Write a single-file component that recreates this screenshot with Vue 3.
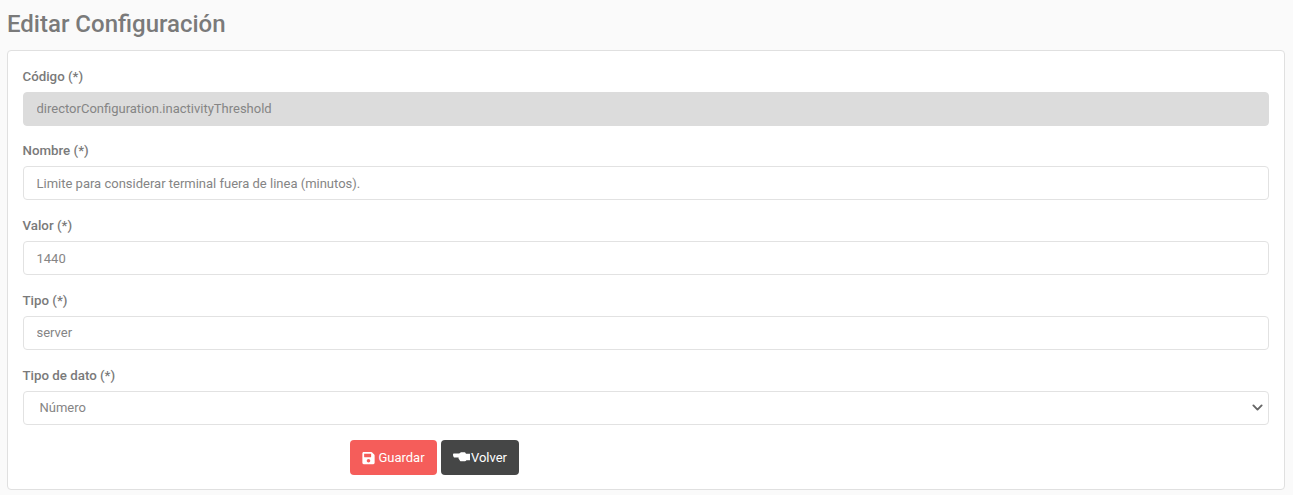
<script setup>
const fields = [
  { label: 'Código (*)', value: 'directorConfiguration.inactivityThreshold', disabled: true },
  { label: 'Nombre (*)', value: 'Limite para considerar terminal fuera de linea (minutos).' },
  { label: 'Valor (*)', value: '1440' },
  { label: 'Tipo (*)', value: 'server' },
]
</script>

<template>
  <div class="page">
    <h1 class="title">Editar Configuración</h1>
    <form class="card" @submit.prevent>
      <div v-for="field in fields" :key="field.label" class="field">
        <label>{{ field.label }}</label>
        <input type="text" :value="field.value" :disabled="field.disabled" />
      </div>
      <div class="field">
        <label>Tipo de dato (*)</label>
        <select>
          <option>Número</option>
        </select>
      </div>
      <div class="actions">
        <button type="submit" class="btn btn-save">
          <svg class="icon" viewBox="0 0 448 512" fill="currentColor">
            <path d="M433.941 129.941l-83.882-83.882A48 48 0 0 0 316.118 32H48C21.49 32 0 53.49 0 80v352c0 26.51 21.49 48 48 48h352c26.51 0 48-21.49 48-48V163.882a48 48 0 0 0-14.059-33.941zM224 416c-35.346 0-64-28.654-64-64 0-35.346 28.654-64 64-64s64 28.654 64 64c0 35.346-28.654 64-64 64zm96-304.52V212c0 6.627-5.373 12-12 12H76c-6.627 0-12-5.373-12-12V108c0-6.627 5.373-12 12-12h228.52c3.183 0 6.235 1.264 8.485 3.515l3.48 3.48A11.996 11.996 0 0 1 320 111.48z" />
          </svg>
          Guardar
        </button>
        <button type="button" class="btn btn-back">
          <svg class="icon icon-hand" viewBox="0 0 17 12" fill="currentColor">
            <path d="M1 1.6h5.2L7.6 .6c.3-.2.6-.3 1-.3h3c.5 0 .8.3 1 .7l.3.8H17v6.4h-3.6c-.3.7-.8 1.1-1.5 1.1H8c-.7 0-1.2-.5-1.2-1.1-.4-.2-.7-.6-.7-1-.4-.2-.6-.6-.6-1 0-.3.1-.5.2-.7H1C.4 4.5 0 3.9 0 3s.4-1.4 1-1.4z" />
          </svg>
          Volver
        </button>
      </div>
    </form>
  </div>
</template>

<style scoped>
.page {
  height: 495px;
  box-sizing: border-box;
  padding: 11px 8px 5px 7px;
  background: #fafafa;
  font-family: Roboto, "Liberation Sans", sans-serif;
  display: flex;
  flex-direction: column;
}

.title {
  margin: 0 0 13px;
  font-size: 24px;
  line-height: 26px;
  font-weight: 500;
  color: #7a7a7a;
}

.card {
  flex: 1;
  box-sizing: border-box;
  padding: 16.6px 15px 0 14.5px;
  background: #fff;
  border: 1px solid #e0e0e0;
  border-radius: 4px;
}

.field {
  margin-bottom: 16.75px;
}

label {
  display: block;
  height: 17px;
  margin-bottom: 7px;
  font-size: 13.3px;
  line-height: 17px;
  font-weight: 500;
  color: #7a7a7a;
}

input,
select {
  display: block;
  width: 100%;
  height: 34px;
  box-sizing: border-box;
  padding: 0 13px;
  font-family: inherit;
  font-size: 13px;
  color: #858585;
  background-color: #fff;
  border: 1px solid #e2e2e2;
  border-radius: 4px;
  outline: none;
}

input:disabled {
  background: #dcdcdc;
  border-color: #dcdcdc;
  color: #858585;
  opacity: 1;
}

select {
  padding-left: 16px;
  appearance: none;
  background-image: url("data:image/svg+xml,%3Csvg xmlns='http://www.w3.org/2000/svg' viewBox='0 0 16 16'%3E%3Cpath fill='none' stroke='%23666' stroke-linecap='round' stroke-linejoin='round' stroke-width='2.8' d='M2 5l6 6 6-6'/%3E%3C/svg%3E");
  background-repeat: no-repeat;
  background-position: right 5px center;
  background-size: 11px 11px;
}

.actions {
  display: flex;
  gap: 4px;
  margin-top: -1.35px;
  padding-left: 327.5px;
}

.btn {
  display: flex;
  align-items: center;
  justify-content: center;
  height: 35px;
  padding: 0;
  border: none;
  border-radius: 4px;
  color: #fff;
  font-family: inherit;
  font-size: 13px;
  font-weight: 400;
}

.btn-save {
  width: 87px;
  gap: 3px;
  background: #f55d5a;
}

.btn-back {
  width: 78px;
  gap: 1px;
  background: #454646;
}

.icon {
  width: 13px;
  height: 14px;
}

.icon-hand {
  width: 17px;
  height: 12px;
}
</style>

<style>
body {
  background: #fafafa;
}
</style>
